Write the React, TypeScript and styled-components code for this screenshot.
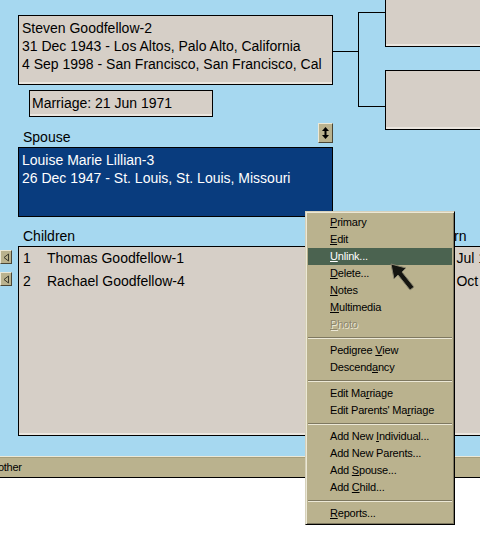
import React from "react";
import styled, { createGlobalStyle } from "styled-components";

const colors = {
  sky: "#a6d8f0",
  card: "#d6cfc7",
  navy: "#093c7e",
  face: "#bab28e",
  faceLight: "#ece8d6",
  faceShadow: "#7e7860",
  hilite: "#4b6350",
};

const GlobalStyle = createGlobalStyle`
  html, body { margin: 0; padding: 0; background: #fff; }
  body { font-family: "Liberation Sans", Arial, sans-serif; }
`;

const Window = styled.div`
  width: 480px;
  height: 551px;
  position: relative;
  overflow: hidden;
  background: #fff;
`;

const Canvas = styled.div`
  height: 456px;
  box-sizing: border-box;
  background: ${colors.sky};
  padding-left: 18px;
  display: flex;
  flex-direction: column;
  overflow: hidden;
  font-size: 14px;
  color: #000;
`;

const TopRow = styled.div`
  display: flex;
  height: 123px;
  flex-shrink: 0;
`;

const PersonCol = styled.div`
  display: flex;
  flex-direction: column;
  padding-top: 15px;
`;

const Card = styled.div<{ $w: number; $h: number }>`
  width: ${(p) => p.$w}px;
  height: ${(p) => p.$h}px;
  flex-shrink: 0;
  box-sizing: border-box;
  border: 1px solid #000;
  background: ${colors.card};
  box-shadow: inset 0 -2px 0 #ebe6df;
  padding: 3px 3px;
  line-height: 18px;
  white-space: nowrap;
  overflow: hidden;
`;

const MarriageCard = styled(Card)`
  margin-top: 5px;
  margin-left: 11px;
  padding: 3px 2px;
`;

const ParentsCol = styled.div`
  display: flex;
  flex-direction: column;
  margin-top: -20px;
  gap: 23px;
`;

const Connector = styled.svg`
  flex-shrink: 0;
  overflow: visible;
`;

const SpouseHeader = styled.div`
  width: 315px;
  height: 24px;
  flex-shrink: 0;
  display: flex;
  justify-content: space-between;
  align-items: flex-start;
`;

const Label = styled.div`
  padding: 5px 0 0 5px;
  line-height: 18px;
`;

const Bevel = styled.div`
  box-sizing: border-box;
  background: ${colors.face};
  border-top: 1px solid ${colors.faceLight};
  border-left: 1px solid ${colors.faceLight};
  border-right: 1px solid #4a4636;
  border-bottom: 1px solid #4a4636;
  display: flex;
  align-items: center;
  justify-content: center;
`;

const SpinButton = styled(Bevel)`
  width: 15px;
  height: 20px;
`;

const SpouseCard = styled(Card)`
  background: ${colors.navy};
  color: #fff;
  box-shadow: none;
`;

const ChildrenHeader = styled.div`
  height: 29px;
  flex-shrink: 0;
  display: grid;
  grid-template-columns: 414px auto;
  padding: 10px 0 0 5px;
  box-sizing: border-box;
  line-height: 18px;
  white-space: nowrap;
`;

const ChildrenArea = styled.div`
  display: flex;
  margin-left: -18px;
  height: 190px;
  flex-shrink: 0;
`;

const ArrowCol = styled.div`
  width: 18px;
  flex-shrink: 0;
  display: flex;
  flex-direction: column;
  gap: 8px;
  padding-top: 4px;
`;

const ArrowButton = styled(Bevel)`
  width: 12px;
  height: 14px;
`;

const ChildrenBox = styled(Card)`
  width: 480px;
  padding: 0 0 0 4px;
`;

const ChildRow = styled.div`
  display: grid;
  grid-template-columns: 24px 390px auto;
  height: 23px;
  line-height: 23px;
`;

const StatusBar = styled.div`
  height: 22px;
  box-sizing: border-box;
  background: ${colors.face};
  border-top: 1px solid ${colors.faceLight};
  border-bottom: 1px solid #000;
  box-shadow: inset 0 1px 0 #a59e7c;
  font-size: 11px;
  letter-spacing: -0.25px;
  line-height: 20px;
  white-space: nowrap;
  overflow: hidden;
`;

const StatusText = styled.span`
  margin-left: -11px;
`;

const Menu = styled.div`
  position: absolute;
  left: 305px;
  top: 211px;
  width: 150px;
  box-sizing: border-box;
  background: ${colors.face};
  border-top: 1px solid #d6d1bb;
  border-left: 1px solid #d6d1bb;
  border-right: 1px solid #000;
  border-bottom: 1px solid #000;
  box-shadow: inset 1px 1px 0 ${colors.faceLight}, inset -1px -1px 0 ${colors.faceShadow};
  padding: 2px;
  font-size: 11px;
  letter-spacing: -0.2px;
`;

const MenuItem = styled.div<{ $active?: boolean; $disabled?: boolean }>`
  height: 17px;
  line-height: 17px;
  padding-left: 22px;
  white-space: nowrap;
  background: ${(p) => (p.$active ? colors.hilite : "transparent")};
  color: ${(p) => (p.$active ? "#fff" : p.$disabled ? "#8c866c" : "#000")};
  text-shadow: ${(p) => (p.$disabled ? `1px 1px 0 ${colors.faceLight}` : "none")};
`;

const Mnemonic = styled.span`
  text-decoration: underline;
  text-underline-offset: 1px;
`;

const Separator = styled.div`
  height: 9px;
  box-sizing: border-box;
  padding-top: 4px;
  &::before {
    content: "";
    display: block;
    height: 1px;
    background: ${colors.faceShadow};
    border-bottom: 1px solid ${colors.faceLight};
  }
`;

const Cursor = styled.svg`
  position: absolute;
  left: 389px;
  top: 262px;
`;

type Item = { label: string; key?: number; active?: boolean; disabled?: boolean } | "sep";

const menuItems: Item[] = [
  { label: "Primary", key: 0 },
  { label: "Edit", key: 0 },
  { label: "Unlink...", key: 0, active: true },
  { label: "Delete...", key: 0 },
  { label: "Notes", key: 0 },
  { label: "Multimedia", key: 0 },
  { label: "Photo", key: 0, disabled: true },
  "sep",
  { label: "Pedigree View", key: 9 },
  { label: "Descendancy", key: 7 },
  "sep",
  { label: "Edit Marriage", key: 7 },
  { label: "Edit Parents' Marriage", key: 16 },
  "sep",
  { label: "Add New Individual...", key: 8 },
  { label: "Add New Parents..." },
  { label: "Add Spouse...", key: 4 },
  { label: "Add Child...", key: 4 },
  "sep",
  { label: "Reports...", key: 0 },
];

const ItemLabel = ({ label, k }: { label: string; k?: number }) => {
  if (k === undefined) return <>{label}</>;
  return (
    <>
      {label.slice(0, k)}
      <Mnemonic>{label[k]}</Mnemonic>
      {label.slice(k + 1)}
    </>
  );
};

const children = [
  { n: 1, name: "Thomas Goodfellow-1", born: "12 Jul 1972" },
  { n: 2, name: "Rachael Goodfellow-4", born: "21 Oct 1975" },
];

export default function App() {
  return (
    <Window>
      <GlobalStyle />
      <Canvas>
        <TopRow>
          <PersonCol>
            <Card $w={315} $h={70}>
              <div>Steven Goodfellow-2</div>
              <div>31 Dec 1943 - Los Altos, Palo Alto, California</div>
              <div>4 Sep 1998 - San Francisco, San Francisco, Cal</div>
            </Card>
            <MarriageCard $w={184} $h={27}>Marriage: 21 Jun 1971</MarriageCard>
          </PersonCol>
          <Connector width="52" height="123">
            <g stroke="#000" strokeWidth="1" shapeRendering="crispEdges">
              <line x1="0" y1="51.5" x2="25" y2="51.5" />
              <line x1="25.5" y1="12" x2="25.5" y2="107" />
              <line x1="25" y1="12.5" x2="52" y2="12.5" />
              <line x1="25" y1="106.5" x2="52" y2="106.5" />
            </g>
          </Connector>
          <ParentsCol>
            <Card $w={120} $h={67} />
            <Card $w={120} $h={60} />
          </ParentsCol>
        </TopRow>

        <SpouseHeader>
          <Label>Spouse</Label>
          <SpinButton>
            <svg width="9" height="12" viewBox="0 0 9 12">
              <polygon points="4.5,0 1,4 8,4" fill="#000" />
              <rect x="3.5" y="4" width="2" height="4" fill="#000" />
              <polygon points="1,8 8,8 4.5,12" fill="#000" />
            </svg>
          </SpinButton>
        </SpouseHeader>
        <SpouseCard $w={315} $h={70}>
          <div>Louise Marie Lillian-3</div>
          <div>26 Dec 1947 - St. Louis, St. Louis, Missouri</div>
        </SpouseCard>

        <ChildrenHeader>
          <div>Children</div>
          <div>Born</div>
        </ChildrenHeader>
        <ChildrenArea>
          <ArrowCol>
            {children.map((c) => (
              <ArrowButton key={c.n}>
                <svg width="7" height="9" viewBox="0 0 7 9">
                  <polygon points="1,4.5 5.5,1 5.5,8" fill="none" stroke="#3c3a2c" strokeWidth="1" />
                </svg>
              </ArrowButton>
            ))}
          </ArrowCol>
          <ChildrenBox $w={480} $h={190}>
            {children.map((c) => (
              <ChildRow key={c.n}>
                <span>{c.n}</span>
                <span>{c.name}</span>
                <span>{c.born}</span>
              </ChildRow>
            ))}
          </ChildrenBox>
        </ChildrenArea>
      </Canvas>
      <StatusBar>
        <StatusText>Mother</StatusText>
      </StatusBar>

      <Menu>
        {menuItems.map((it, i) =>
          it === "sep" ? (
            <Separator key={i} />
          ) : (
            <MenuItem key={i} $active={it.active} $disabled={it.disabled}>
              <ItemLabel label={it.label} k={it.key} />
            </MenuItem>
          )
        )}
      </Menu>

      <Cursor width="30" height="32" viewBox="0 0 30 32">
        <polygon
          points="2,2 5,17 9,13 21,28 25,25 13,10 17,6"
          fill="#151510"
          stroke="#8a8670"
          strokeWidth="1"
        />
      </Cursor>
    </Window>
  );
}
